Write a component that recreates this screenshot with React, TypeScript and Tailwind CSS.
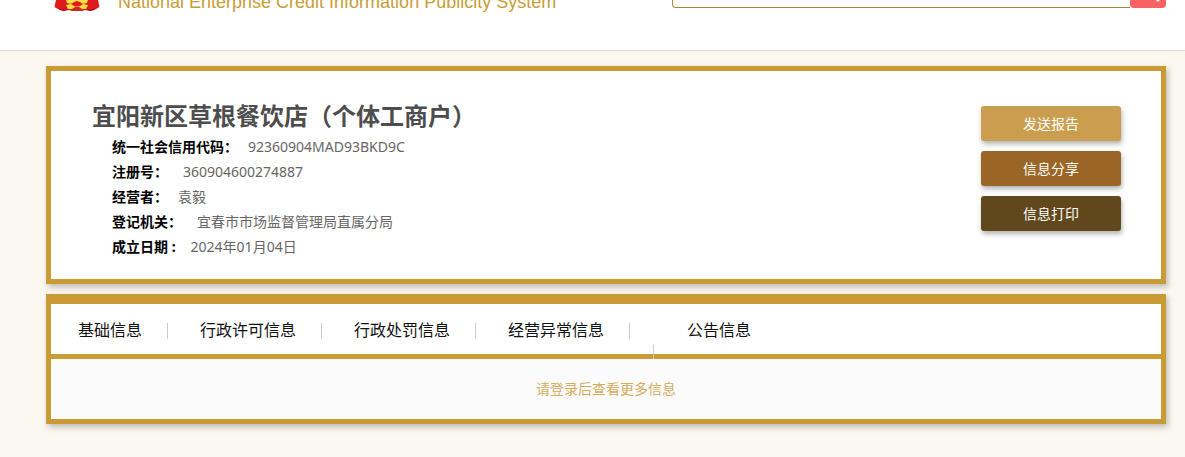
import React from "react";

const details = [
  { label: "统一社会信用代码：", value: "92360904MAD93BKD9C", gap: "ml-2.5" },
  { label: "注册号：", value: "360904600274887", gap: "ml-[15px]" },
  { label: "经营者：", value: "袁毅", gap: "ml-2.5" },
  { label: "登记机关：", value: "宜春市市场监督管理局直属分局", gap: "ml-[15px]" },
  { label: "成立日期 :", value: "2024年01月04日", gap: "ml-[15px]" },
];

const actions = [
  { text: "发送报告", color: "bg-[#ca9e4e]" },
  { text: "信息分享", color: "bg-[#996625]" },
  { text: "信息打印", color: "bg-[#61481c]" },
];

const tabs = ["基础信息", "行政许可信息", "行政处罚信息", "经营异常信息"];

function Emblem() {
  return (
    <svg width="46" height="48" viewBox="0 0 46 48" className="ml-2 shrink-0" role="img" aria-label="国徽">
      <circle cx="23" cy="18" r="19" fill="#dc1a18" stroke="#f3c42c" strokeWidth="3" />
      <path d="M3 31 L43 31 L45.500 43 L40 46 L36 47 L31 46 L28 47 L18 47 L15 46 L10 47 L6 46 L0.500 43 Z" fill="#e01b1b" />
      <path d="M3 44 L6 46 L10 47 L14 45 L8 45 Z M43 44 L40 46 L36 47 L32 45 L38 45 Z" fill="#b3121a" />
      <path d="M12 36 L34 36 L33 39 Q28 41 26 38 L23 37 L20 38 Q18 41 13 39 Z" fill="#ffdf45" />
      <path d="M12 41 L17 40 L20 42 Q23 43 26 42 L29 40 L34 41 L32 45 L28 45 L25 43 L21 43 L18 45 L14 45 Z" fill="#ffdf45" />
      <path d="M18 47 L20 44 L26 44 L28 47 Z" fill="#c9281c" />
    </svg>
  );
}

export default function App() {
  return (
    <div className="min-h-screen bg-[#fbf8f0] font-['Noto_Sans','Noto_Sans_CJK_SC',sans-serif] text-sm text-[#666]">
      <header className="h-[51px] overflow-hidden border-b border-[#ddd] bg-white pr-[19px] pl-[46px]">
        <div className="-mt-9 flex items-end">
          <Emblem />
          <p className="ml-[18px] font-['Liberation_Sans',sans-serif] text-lg leading-5 whitespace-nowrap text-[#c79d35]">
            National Enterprise Credit Information Publicity System
          </p>
          <form className="mb-1 ml-auto flex h-10 w-[494px]" onSubmit={(e) => e.preventDefault()}>
            <input
              aria-label="搜索企业"
              className="min-w-0 flex-1 rounded-l border border-r-0 border-[#a98436] bg-white px-3 outline-none"
            />
            <button aria-label="搜索" className="flex w-9 items-end justify-end rounded-r rounded-bl bg-[#f86262] pr-1.5 pb-1.5">
              <svg width="22" height="22" viewBox="0 0 22 22" fill="none" stroke="white" strokeWidth="3" strokeLinecap="round">
                <circle cx="9" cy="8" r="6" />
                <path d="M14 13 L20 20" />
              </svg>
            </button>
          </form>
        </div>
      </header>

      <main className="pt-[15px] pr-[19px] pb-8 pl-[46px]">
        <section className="flex items-start justify-between border-[5px] border-[#c99b35] bg-white pr-10 pb-5 pl-[41px] shadow-[2px_3px_6px_rgba(0,0,0,0.25)]">
          <div className="pt-7">
            <h1 className="pb-0.5 text-2xl leading-[33px] font-bold text-[#4d4d4d]">宜阳新区草根餐饮店（个体工商户）</h1>
            <dl className="ml-5">
              {details.map((d) => (
                <div key={d.label} className="flex h-[25px] items-center">
                  <dt className="leading-[25px] font-bold text-black">{d.label}</dt>
                  <dd className={`leading-[25px] ${d.gap}`}>{d.value}</dd>
                </div>
              ))}
            </dl>
          </div>
          <div className="flex flex-col gap-2.5 pt-[35px]">
            {actions.map((a) => (
              <button
                key={a.text}
                className={`h-[35px] w-[140px] rounded-[3px] text-white shadow-[1px_3px_5px_rgba(0,0,0,0.3)] ${a.color}`}
              >
                {a.text}
              </button>
            ))}
          </div>
        </section>

        <section className="mt-2.5 border-[5px] border-t-10 border-[#c99b35] bg-white shadow-[2px_3px_6px_rgba(0,0,0,0.25)]">
          <nav className="flex h-[55px] items-center border-b-[5px] border-[#c99b35] text-base leading-[50px] text-[#111]">
            {tabs.map((t, i) => (
              <React.Fragment key={t}>
                <a href="#" className={i === 0 ? "mt-0.5 mr-[25px] ml-[27px]" : "mt-0.5 mr-[25px] ml-8"}>
                  {t}
                </a>
                <span className="mt-1 h-4 w-px bg-[#ccc]" />
              </React.Fragment>
            ))}
            <span className="relative h-[50px] w-6">
              <span className="absolute right-0 -bottom-[5px] h-3.5 w-px bg-[#ccc]" />
            </span>
            <a href="#" className="mt-0.5 ml-[33px]">公告信息</a>
          </nav>
          <p className="bg-[#fbfbfb] text-center leading-[60px] text-[#d5ab5c]">请登录后查看更多信息</p>
        </section>
      </main>
    </div>
  );
}
